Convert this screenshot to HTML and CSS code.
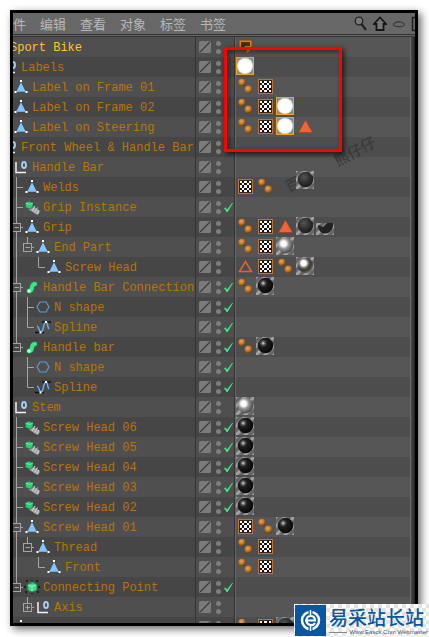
FILE: index.html
```html
<!DOCTYPE html>
<html lang="zh">
<head>
    <meta charset="utf-8">
    <title>Sport Bike</title>
    <link rel="stylesheet" href="styles.css">
</head>
<body>
    <svg class="sprite" aria-hidden="true">
        <defs>
            <pattern id="hatch" width="9" height="9" patternUnits="userSpaceOnUse">
                <rect width="9" height="9" fill="#666"/>
                <path d="M-2 11L11 -2M-2 2L2 -2M7 11L11 7" stroke="#a2a2a2" stroke-width="3"/>
            </pattern>
            <radialGradient id="gWhite" cx=".5" cy=".5" r=".5">
                <stop offset=".8" stop-color="#fff"/><stop offset="1" stop-color="#ddd"/>
            </radialGradient>
            <radialGradient id="gBlack" cx=".35" cy=".35" r=".65">
                <stop offset="0" stop-color="#ddd"/><stop offset=".2" stop-color="#555"/><stop offset=".4" stop-color="#1c1c1c"/><stop offset="1" stop-color="#0b0a08"/>
            </radialGradient>
            <radialGradient id="gMatte" cx=".4" cy=".35" r=".65">
                <stop offset="0" stop-color="#555"/><stop offset=".5" stop-color="#333"/><stop offset="1" stop-color="#1c1c1c"/>
            </radialGradient>
            <radialGradient id="gMetal" cx=".38" cy=".38" r=".65">
                <stop offset="0" stop-color="#fff"/><stop offset=".25" stop-color="#fff"/><stop offset=".5" stop-color="#999"/><stop offset="1" stop-color="#444"/>
            </radialGradient>
            <radialGradient id="gChrome" cx=".38" cy=".35" r=".65">
                <stop offset="0" stop-color="#fff"/><stop offset=".25" stop-color="#fff"/><stop offset=".45" stop-color="#777"/><stop offset=".7" stop-color="#383430"/><stop offset="1" stop-color="#6b6862"/>
            </radialGradient>
            <radialGradient id="gDot" cx=".4" cy=".35" r=".65">
                <stop offset="0" stop-color="#f0a555"/><stop offset=".5" stop-color="#c67b2a"/><stop offset="1" stop-color="#6a3d10"/>
            </radialGradient>
        </defs>

        <!-- object icons -->
        <symbol id="poly" viewBox="0 0 16 20">
            <path d="M8 5L13 15H3Z" fill="#84c4fb"/>
            <path d="M8 4L2.500 15H13.500Z" fill="none" stroke="#3c4a58" stroke-width=".5"/>
            <path d="M7 3h2v2H7zM1.500 14h2v2h-2zM12.500 14h2v2h-2z" fill="#fff"/>
        </symbol>
        <symbol id="null" viewBox="0 0 16 20">
            <path d="M3 5V15.500H13" fill="none" stroke="#f2f2f2" stroke-width="1.500"/>
            <ellipse cx="11" cy="8" rx="2" ry="3" fill="none" stroke="#a8cff5" stroke-width="1.800"/>
        </symbol>
        <symbol id="inst" viewBox="0 0 16 20">
            <path d="M7 11L13 15" stroke="#a2a2a2" stroke-width="5" stroke-linecap="round"/>
            <path d="M8 14l3-5M10.500 15.500l3-5M13 17l2-4" stroke="#dadada" stroke-width="1"/>
            <path d="M1 6L5 4L9 6V10.500L5.500 12L1.500 10.500Z" fill="#2fc878" stroke="#145c36" stroke-width=".6"/>
            <path d="M2 6L5.500 7.500L9 6" fill="none" stroke="#8df0b8" stroke-width=".8"/>
        </symbol>
        <symbol id="sweep" viewBox="0 0 16 20">
            <path d="M5 14C10 14 6 7 11 7" fill="none" stroke="#1c7d49" stroke-width="5.500" stroke-linecap="round"/>
            <path d="M5 14C10 14 6 7 11 7" fill="none" stroke="#45e08e" stroke-width="4" stroke-linecap="round"/>
            <circle cx="5" cy="14" r="1.800" fill="#b7ffd6"/>
        </symbol>
        <symbol id="nside" viewBox="0 0 16 20">
            <path d="M5 5H11L14 10L11 15H5L2 10Z" fill="none" stroke="#5e9ad0" stroke-width="1.200"/>
        </symbol>
        <symbol id="spline" viewBox="0 0 16 20">
            <path d="M0 15.500H9M7 5H16" stroke="#111" stroke-width="1.500"/>
            <path d="M2 9C4 9 4 15 6 15C9 15 8 5 11 5C13 5 12 10 14 12" fill="none" stroke="#6cacf0" stroke-width="1.500"/>
            <path d="M4.500 14.500h2v2h-2zM10 4h2v2h-2z" fill="#fff"/>
        </symbol>
        <symbol id="conn" viewBox="0 0 16 20">
            <path d="M2 4h2M12 4h2M1 15h2M13 15h2M8 3v1M8 16v1M1 9v2M15 9v2" stroke="#111" stroke-width="1.500"/>
            <circle cx="8" cy="10" r="5.500" fill="#1c8c50"/>
            <path d="M4 8L9 6L12.500 8V13L8 14.500L4.500 13Z" fill="#3ddb88"/>
            <path d="M4 8L8 9.500L12 8M8 9.500V14" fill="none" stroke="#a8ffd0" stroke-width=".8"/>
        </symbol>

        <!-- tags -->
        <symbol id="dots" viewBox="0 0 18 20">
            <circle cx="6" cy="5.500" r="3.700" fill="url(#gDot)"/>
            <circle cx="12.500" cy="12.500" r="3.900" fill="url(#gDot)"/>
        </symbol>
        <symbol id="check" viewBox="0 0 18 20">
            <rect x="2" y="2" width="15" height="15" fill="#bd7531"/>
            <rect x="3" y="3" width="13" height="13" fill="#3a2410"/>
            <rect x="4" y="4" width="11" height="11" fill="#111"/>
            <path d="M4 4h2v2H4zM8 4h3v2H8zM13 4h2v2h-2zM6 6h2v2H6zM11 6h2v2h-2zM4 8h2v3H4zM8 8h3v3H8zM13 8h2v3h-2zM6 11h2v2H6zM11 11h2v2h-2zM4 13h2v2H4zM8 13h3v2H8zM13 13h2v2h-2z" fill="#fff"/>
        </symbol>
        <symbol id="tri" viewBox="0 0 18 20">
            <path d="M9.500 3L16.500 15.500H2.500Z" fill="#ef6537" stroke="#9c3c1c" stroke-width=".6"/>
        </symbol>
        <symbol id="triline" viewBox="0 0 18 20">
            <path d="M9.500 4.500L15.500 14.500H3.500Z" fill="none" stroke="#e85f35" stroke-width="1.500"/>
        </symbol>
        <symbol id="display" viewBox="0 0 18 20">
            <path d="M3 3H16V12L12 16H10V13H3Z" fill="#d8812b" stroke="#7a4310"/>
            <path d="M5 5H14V9H9V11H5Z" fill="#4c2a0a"/>
        </symbol>
        <symbol id="white" viewBox="0 0 18 20">
            <rect x=".5" y=".5" width="17" height="17" fill="#8c8c8c" stroke="#f5a21b"/>
            <circle cx="9" cy="9" r="8" fill="url(#gWhite)"/>
        </symbol>
        <symbol id="black" viewBox="0 0 18 20">
            <rect width="18" height="18" fill="url(#hatch)"/>
            <circle cx="9.500" cy="8.500" r="7.800" fill="url(#gBlack)"/>
        </symbol>
        <symbol id="matte" viewBox="0 0 18 20">
            <rect width="18" height="18" fill="url(#hatch)"/>
            <circle cx="9.500" cy="8.500" r="7.800" fill="url(#gMatte)"/>
        </symbol>
        <symbol id="half" viewBox="0 0 18 20">
            <path d="M0 6H18V18H0Z" fill="url(#hatch)"/>
            <path d="M2 8L7 10L11 6L17 6C18 12 14 16.500 9.500 16.500C5 16.500 2 13 2 8Z" fill="#222"/>
        </symbol>
        <symbol id="metal" viewBox="0 0 18 20">
            <rect width="18" height="18" fill="url(#hatch)"/>
            <circle cx="9.500" cy="8.500" r="7.800" fill="url(#gMetal)"/>
        </symbol>
        <symbol id="chrome" viewBox="0 0 18 20">
            <rect width="18" height="18" fill="url(#hatch)"/>
            <circle cx="9.500" cy="8.500" r="7.800" fill="url(#gChrome)"/>
        </symbol>
        <symbol id="layer" viewBox="0 0 12 20">
            <rect y="4" width="12" height="12" rx="1.500" fill="#7b7b7b"/>
            <path d="M1 15L11 5" stroke="#3c3c3c" stroke-width="1.300"/>
        </symbol>
    </svg>

    <main class="manager">
        <header class="menubar">
            <nav class="menus">
                <button type="button">件</button>
                <button type="button">编辑</button>
                <button type="button">查看</button>
                <button type="button">对象</button>
                <button type="button">标签</button>
                <button type="button">书签</button>
            </nav>
            <div class="tools">
                <button type="button" aria-label="搜索">
                    <svg width="14" height="16" viewBox="0 0 14 16"><circle cx="5" cy="5" r="3.800" fill="#777" stroke="#222" stroke-width="1.300"/><path d="M7.500 8L12 14" stroke="#222" stroke-width="2.200"/></svg>
                </button>
                <button type="button" aria-label="主页">
                    <svg width="14" height="16" viewBox="0 0 14 16"><path d="M7 1.500L13 8H10.500V14H3.500V8H1Z" fill="#777" stroke="#161616" stroke-width="1.800"/></svg>
                </button>
                <button type="button" aria-label="显示">
                    <svg width="14" height="16" viewBox="0 0 14 16"><path d="M1 8.500C4 5 10 5 13 8.500C10 11.500 4 11.500 1 8.500Z" fill="none" stroke="#2c2c2c"/></svg>
                </button>
                <button type="button" aria-label="添加">
                    <svg width="14" height="16" viewBox="0 0 14 16"><path d="M1.500 1.500H13.500V14.500H1.500ZM4 8H11M7.500 5V11" fill="none" stroke="#1c1c1c" stroke-width="1.500"/></svg>
                </button>
            </div>
        </header>

        <div class="body">
            <div class="tree" id="tree"></div>
            <div class="scrollbar"></div>
        </div>

        <div class="stamp stamp-start">百</div>
        <div class="stamp stamp-end">熊仔仔</div>
        <div class="highlight"></div>
    </main>

    <footer class="site">
        <svg class="site-logo" viewBox="0 0 31 31">
            <rect width="31" height="31" fill="#0757a5"/>
            <circle cx="15.500" cy="15.500" r="8.500" fill="none" stroke="#fff" stroke-width="2.500"/>
            <path d="M15.500 3V10M15.500 21V28" stroke="#0757a5" stroke-width="4"/>
            <path d="M15.500 5V10M15.500 21V26" stroke="#fff" stroke-width="1.500"/>
            <path d="M10 15.500H20C20 9.500 11.500 9.500 11.500 15.500C11.500 20.500 18 21.500 20 18" fill="none" stroke="#fff" stroke-width="2.200"/>
        </svg>
        <div class="site-text">
            <div class="site-name">易采站长站</div>
            <div class="site-url">Www.Easck.Com Webmaster</div>
        </div>
    </footer>

    <script>
    // depth, guides, icon, name, enabled, tags
    // guides: | line, t branch, l last branch, m open node, e open last node, p closed node
    const objects = [
        [0, '', '', 'Sport Bike', 0, 'display'],
        [1, '', 'null', 'Labels', 0, 'white'],
        [2, '', 'poly', 'Label on Frame 01', 0, 'dots check'],
        [2, '', 'poly', 'Label on Frame 02', 0, 'dots check white'],
        [2, '', 'poly', 'Label on Steering', 0, 'dots check white tri'],
        [1, '', 'null', 'Front Wheel & Handle Bar', 0, ''],
        [2, '', 'null', 'Handle Bar', 0, ''],
        [3, 't', 'poly', 'Welds', 0, 'check dots none matte-raised'],
        [3, 't', 'inst', 'Grip Instance', 1, ''],
        [3, 'm', 'poly', 'Grip', 0, 'dots check tri matte half'],
        [4, '|e', 'poly', 'End Part', 0, 'dots check metal'],
        [5, '| l', 'poly', 'Screw Head', 0, 'triline check dots chrome'],
        [3, 'm', 'sweep', 'Handle Bar Connection', 1, 'dots black'],
        [4, '|t', 'nside', 'N shape', 1, ''],
        [4, '|l', 'spline', 'Spline', 1, ''],
        [3, 'e', 'sweep', 'Handle bar', 1, 'dots black'],
        [4, ' t', 'nside', 'N shape', 1, ''],
        [4, ' l', 'spline', 'Spline', 1, ''],
        [2, '', 'null', 'Stem', 0, 'metal'],
        [3, 't', 'inst', 'Screw Head 06', 1, 'black'],
        [3, 't', 'inst', 'Screw Head 05', 1, 'black'],
        [3, 't', 'inst', 'Screw Head 04', 1, 'black'],
        [3, 't', 'inst', 'Screw Head 03', 1, 'black'],
        [3, 't', 'inst', 'Screw Head 02', 1, 'black'],
        [3, 'm', 'poly', 'Screw Head 01', 0, 'check dots black'],
        [4, '|e', 'poly', 'Thread', 0, 'dots check'],
        [5, '| l', 'poly', 'Front', 0, 'dots check'],
        [3, 'e', 'conn', 'Connecting Point', 1, ''],
        [4, ' p', 'null', 'Axis', 0, ''],
        [2, '', 'poly', '', 0, 'dots check matte']
    ];
    const lines = {
        ' ': '',
        '|': 'M3.500 0V20',
        't': 'M3.500 0V20M3.500 10.500H10',
        'l': 'M3.500 0V10.500H10',
        'm': 'M3.500 0V6M3.500 15V20M8 10.500H10',
        'e': 'M3.500 0V6M8 10.500H10',
        'p': 'M3.500 0V6M8 10.500H10'
    };
    function use(id, cls, w) {
        return `<svg class="${cls}" width="${w}" height="20"><use href="#${id}"/></svg>`;
    }
    function guide(g) {
        const line = `<path d="${lines[g]}"/>`;
        if (!'mep'.includes(g)) {
            return `<svg class="guide" width="11" height="20">${line}</svg>`;
        }
        const sign = g === 'p' ? 'M1.500 10.500H6M3.500 8V13' : 'M1.500 10.500H6';
        return `<button type="button" class="fold" aria-label="fold"><svg class="guide" width="11" height="20">${line}<rect x="-.5" y="6.500" width="8" height="8"/><path d="${sign}"/></svg></button>`;
    }
    function tag(t) {
        if (t === 'matte-raised') {
            return `<span class="tag raised">${use('matte', '', 18)}</span>`;
        }
        return `<span class="tag">${t === 'none' ? '' : use(t, '', 18)}</span>`;
    }
    document.getElementById('tree').innerHTML = objects.map(([depth, guides, icon, name, on, tags]) => `
        <div class="row">
            <div class="name depth${depth}">${[...guides].map(guide).join('')}${icon ? use(icon, 'icon', 16) : ''}<span>${name.replace('&', '&amp;')}</span></div>
            <div class="state">${use('layer', '', 12)}<span class="vis"><i></i><i></i></span>${on ? `<input type="checkbox" checked aria-label="${name}">` : ''}</div>
            <div class="tags">${tags ? tags.split(' ').map(tag).join('') : ''}</div>
        </div>`).join('');
    </script>
</body>
</html>
```

FILE: styles.css
```css
* {
    box-sizing: border-box;
}
body {
    margin: 0;
    padding: 10px 11px 11px 10px;
    height: 100vh;
    background: #fff;
    font-family: "Liberation Mono", "Noto Sans CJK SC", monospace;
    overflow: hidden;
}
button {
    margin: 0;
    padding: 0;
    border: none;
    background: none;
    color: inherit;
    font: inherit;
}
svg {
    display: block;
    flex: none;
}
.sprite {
    position: absolute;
    width: 0;
    height: 0;
}
.manager {
    position: relative;
    display: flex;
    flex-direction: column;
    height: 100%;
    border: 3px solid #000;
    background: #4d4d4d;
    box-shadow: 3px 3px 8px rgba(0,0,0,0.6);
}

/* menu bar */
.menubar {
    display: flex;
    justify-content: space-between;
    height: 24px;
    padding-bottom: 3px;
    background: linear-gradient(#686868 21px, #333 21px, #333 22px, #666 22px, #666 23px, #333 23px);
    overflow: hidden;
}
.menus {
    display: flex;
    gap: 14px;
    color: #b8b8b8;
    font-family: "Noto Sans CJK SC", sans-serif;
    font-size: 13px;
    line-height: 21px;
}
.tools {
    display: flex;
    align-items: center;
    gap: 5px;
    width: 61px;
}

/* object list */
.body {
    display: flex;
    flex: 1;
    min-height: 0;
}
.tree {
    flex: 1;
    min-width: 0;
    overflow: hidden;
}
.scrollbar {
    width: 5px;
    border-left: 1px solid #6c6c6c;
    background: linear-gradient(90deg, #4a4a4a, #222);
}
.row {
    display: flex;
    height: 20px;
    background: #4f4f4f;
}
.row:nth-child(even) {
    background: #464646;
}
.name {
    display: flex;
    width: 182px;
    overflow: hidden;
    color: #b87409;
    font-size: 12px;
    line-height: 22px;
    white-space: pre;
}
.depth0 {
    color: #ffc52e;
}
.depth0 span {
    margin-left: -3px;
}
.depth1 .icon {
    margin-left: -11px;
}
.icon {
    margin-right: 3px;
}
.guide {
    overflow: visible;
    fill: none;
    stroke: #a4a4a4;
}
.state {
    display: flex;
    width: 40px;
    padding-left: 3px;
    border-left: 1px solid #333;
    border-right: 1px solid #333;
}
.vis {
    display: flex;
    flex-direction: column;
    gap: 3px;
    margin: 4px 3px 0 5px;
}
.vis i {
    width: 5px;
    height: 5px;
    border-radius: 50%;
    background: #7d7d7d;
}
.state input {
    appearance: none;
    width: 9px;
    height: 9px;
    margin: 6px 0 0;
    background: #45e98c;
    clip-path: polygon(0 55%, 15% 50%, 35% 72%, 90% 0, 100% 0, 40% 100%, 30% 100%);
}
.tags {
    display: flex;
    flex: 1;
    border-left: 1px solid #666;
    background: #565656;
}
.row:nth-child(even) .tags {
    background: #4d4d4d;
}
.tag {
    width: 20px;
}
.raised {
    position: relative;
    bottom: 6px;
    z-index: 1;
}

/* things drawn over the list */
.stamp {
    position: absolute;
    color: #3a3a3a;
    font-family: "Noto Sans CJK SC", sans-serif;
    font-size: 15px;
    font-weight: 500;
    line-height: 16px;
    transform: rotate(-28deg);
}
.stamp-start {
    left: 272px;
    top: 163px;
}
.stamp-end {
    left: 319px;
    top: 130px;
}
.highlight {
    position: absolute;
    left: 211px;
    top: 34px;
    width: 118px;
    height: 105px;
    border: 3px solid #f00;
    box-shadow: 2px 2px 5px rgba(0,0,0,0.7), inset 2px 2px 5px rgba(0,0,0,0.5);
}
.site {
    position: absolute;
    right: 0;
    bottom: 0;
    display: flex;
    gap: 3px;
    width: 135px;
    height: 33px;
    padding: 1px;
    background: repeating-conic-gradient(#e4e4e4 0 25%, #fff 0 50%) 0 0 / 8px 8px;
}
.site-logo {
    width: 31px;
    height: 31px;
}
.site-text {
    flex: 1;
    white-space: nowrap;
}
.site-name {
    color: #0757a5;
    font-family: "Noto Sans CJK SC", sans-serif;
    font-size: 19px;
    font-weight: 500;
    line-height: 23px;
}
.site-url {
    display: flex;
    align-items: center;
    gap: 2px;
    color: #555;
    font-family: "Liberation Sans", sans-serif;
    font-size: 6px;
    line-height: 8px;
}
.site-url::before {
    content: "";
    flex: 1;
    height: 1px;
    background: #888;
}
```
